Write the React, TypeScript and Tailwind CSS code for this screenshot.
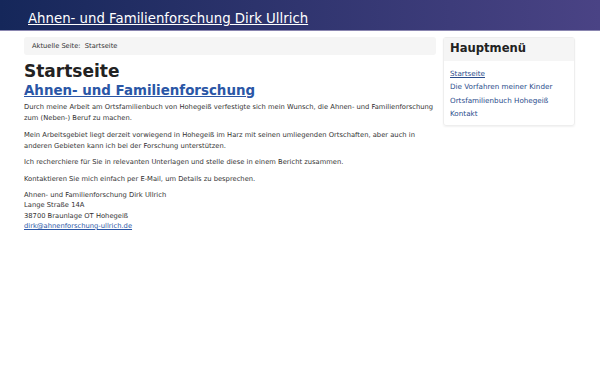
const MENU = ['Startseite', 'Die Vorfahren meiner Kinder', 'Ortsfamilienbuch Hohegeiß', 'Kontakt']

export default function App() {
  return (
    <div className="min-h-[375px] bg-white font-['DejaVu_Sans',sans-serif] text-[#333]">
      <header className="h-[31px] border-b border-[#8a86b0] bg-gradient-to-r from-[#15275a] to-[#4a4385] pl-[28px] pt-[6px]">
        <a href="#" className="text-[13.3px] leading-[18px] text-white underline">
          Ahnen- und Familienforschung Dirk Ullrich
        </a>
      </header>

      <div className="flex gap-[7px] pl-[24px] pr-[25px] pt-[6px]">
        {/* Main content */}
        <main className="w-[412px]">
          <div className="rounded-[3px] bg-[#f5f5f5] px-[8px] py-[4px] text-[6.7px] leading-[10px] text-[#333]">
            Aktuelle Seite:&nbsp; Startseite
          </div>
          <h1 className="mt-[5px] text-[17px] font-bold leading-[22px] text-[#222]">Startseite</h1>
          <h2 className="text-[13.4px] font-bold leading-[18px]">
            <a href="#" className="text-[#2a56a6] underline">Ahnen- und Familienforschung</a>
          </h2>
          <div className="mt-[2px] space-y-[5.5px] text-[6.75px] leading-[11px] text-[#333]">
            <p>
              Durch meine Arbeit am Ortsfamilienbuch von Hohegeiß verfestigte sich mein Wunsch, die Ahnen- und
              Familienforschung zum (Neben-) Beruf zu machen.
            </p>
            <p>
              Mein Arbeitsgebiet liegt derzeit vorwiegend in Hohegeiß im Harz mit seinen umliegenden Ortschaften, aber
              auch in anderen Gebieten kann ich bei der Forschung unterstützen.
            </p>
            <p>Ich recherchiere für Sie in relevanten Unterlagen und stelle diese in einem Bericht zusammen.</p>
            <p>Kontaktieren Sie mich einfach per E-Mail, um Details zu besprechen.</p>
            <p className="leading-[10.3px]">
              Ahnen- und Familienforschung Dirk Ullrich
              <br />
              Lange Straße 14A
              <br />
              38700 Braunlage OT Hohegeiß
              <br />
              <a href="#" className="text-[#2a56a6] underline">dirk@ahnenforschung-ullrich.de</a>
            </p>
          </div>
        </main>

        {/* Sidebar */}
        <aside className="w-[132px]">
          <div className="rounded-[3px] border border-[#eee] shadow-[0_1px_2px_rgba(0,0,0,0.06)]">
            <div className="bg-[#f5f5f5] px-[6px] pb-[5px] pt-[3px] text-[11.6px] font-bold leading-[15px] text-[#222]">
              Hauptmenü
            </div>
            <ul className="px-[6px] pb-[5px] pt-[6px] text-[7.2px] leading-[13.3px]">
              {MENU.map((item, i) => (
                <li key={item}>
                  <a href="#" className={i === 0 ? 'text-[#2a4c8c] underline' : 'text-[#2a4c8c]'}>
                    {item}
                  </a>
                </li>
              ))}
            </ul>
          </div>
        </aside>
      </div>
    </div>
  )
}
